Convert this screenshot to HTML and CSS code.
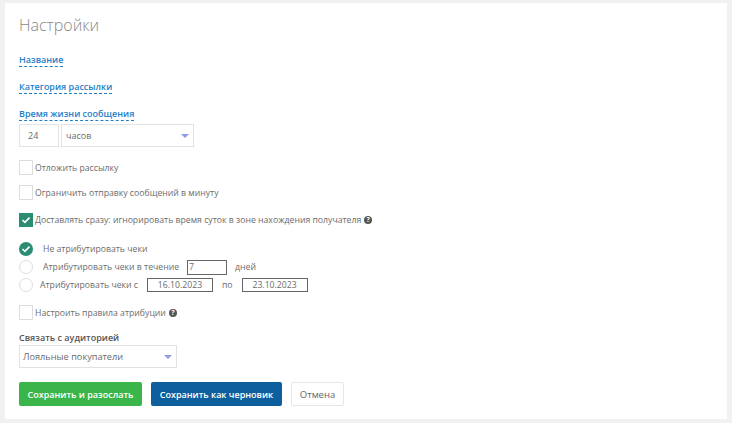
FILE: index.html
```html
<!DOCTYPE html>
<html lang="ru">
<head>
  <meta charset="UTF-8">
  <meta name="viewport" content="width=device-width, initial-scale=1.0">
  <title>Настройки</title>
  <link rel="stylesheet" href="styles.css">
</head>
<body>
  <div class="panel">
    <h1>Настройки</h1>

    <div class="section"><span class="link-label">Название</span></div>
    <div class="section"><span class="link-label">Категория рассылки</span></div>
    <div class="section section-ttl">
      <span class="link-label">Время жизни сообщения</span>
      <div class="ttl-row">
        <div class="field field-num">24</div>
        <div class="field field-select field-unit">часов<span class="caret"></span></div>
      </div>
    </div>

    <div class="check-row check-first"><span class="check"></span><span class="check-text">Отложить рассылку</span></div>
    <div class="check-row check-second"><span class="check"></span><span>Ограничить отправку сообщений в минуту</span></div>
    <div class="check-row check-third">
      <span class="check check-on">
        <svg width="10" height="8" viewBox="0 0 10 8"><path d="M1.5 4l2.4 2.3 4.6-4.6" fill="none" stroke="#fff" stroke-width="1.7"/></svg>
      </span>
      <span>Доставлять сразу: игнорировать время суток в зоне нахождения получателя</span>
      <span class="help">?</span>
    </div>

    <div class="radio-group">
      <div class="radio-row radio-row-first">
        <span class="radio radio-on">
          <svg width="10" height="8" viewBox="0 0 10 8"><path d="M1.5 4l2.4 2.3 4.6-4.6" fill="none" stroke="#fff" stroke-width="1.7"/></svg>
        </span>
        <span class="radio-text">Не атрибутировать чеки</span>
      </div>
      <div class="radio-row">
        <span class="radio"></span>
        <span class="radio-text">Атрибутировать чеки в течение</span>
        <span class="box box-days">7</span>
        <span class="days-label">дней</span>
      </div>
      <div class="radio-row">
        <span class="radio"></span>
        <span class="radio-text radio-text-tight">Атрибутировать чеки с</span>
        <span class="box box-date">16.10.2023</span>
        <span class="to-label">по</span>
        <span class="box box-date">23.10.2023</span>
      </div>
    </div>

    <div class="check-row check-rules"><span class="check"></span><span>Настроить правила атрибуции</span><span class="help">?</span></div>

    <div class="audience">
      <div class="audience-label">Связать с аудиторией</div>
      <div class="field field-select field-audience">Лояльные покупатели<span class="caret"></span></div>
    </div>

    <div class="actions">
      <button class="btn btn-green">Сохранить и разослать</button>
      <button class="btn btn-blue">Сохранить как черновик</button>
      <button class="btn btn-plain">Отмена</button>
    </div>
  </div>
</body>
</html>
```

FILE: styles.css
```css
body {
  margin: 0;
  padding: 3px 5px 4px;
  background: #f1f1f1;
  font-family: "Open Sans", "Liberation Sans", sans-serif;
  font-size: 8.7px;
  color: #6b6b6b;
}
.panel {
  height: 416px;
  box-sizing: border-box;
  background: #fff;
  padding: 11px 14px 0;
}
h1 {
  margin: 0;
  padding-bottom: 1px;
  font-size: 16px;
  line-height: 22px;
  font-weight: 300;
  color: #888;
}
.section {
  margin-top: 16px;
  height: 11px;
}
.section-ttl {
  height: auto;
}
.link-label {
  display: inline-block;
  font-size: 9px;
  font-weight: 600;
  line-height: 13px;
  color: #1f80c8;
  border-bottom: 1px dashed #1f80c8;
}
.ttl-row {
  display: flex;
  gap: 2px;
  margin-top: 3px;
}
.field {
  box-sizing: border-box;
  height: 23px;
  border: 1px solid #e2e2e2;
  line-height: 21px;
  background: #fff;
  font-size: 9px;
}
.field-num {
  width: 40px;
  padding-left: 8px;
}
.field-select {
  position: relative;
  padding-left: 4px;
}
.field-unit {
  width: 133px;
}
.field-audience {
  width: 158px;
  font-size: 9.2px;
  padding-left: 3px;
}
.caret {
  position: absolute;
  right: 4px;
  top: 9px;
  border-left: 4px solid transparent;
  border-right: 4px solid transparent;
  border-top: 4px solid #8d9be8;
}
.check-row {
  display: flex;
  align-items: center;
  line-height: 14px;
}
.check-first { margin-top: 12px; }
.check-second { margin-top: 10px; }
.check-third { margin-top: 13px; }
.check-rules { margin-top: 11px; }
.check-text {
  padding-top: 2px;
}
.check {
  flex: none;
  box-sizing: border-box;
  width: 14px;
  height: 15px;
  margin-right: 2px;
  border: 1px solid #ddd;
  display: flex;
  align-items: center;
  justify-content: center;
}
.check-on {
  height: 14px;
  border: 0;
  background: #2a8c73;
}
.help {
  flex: none;
  width: 8px;
  height: 8px;
  margin-left: 3px;
  border-radius: 50%;
  background: #555;
  color: #fff;
  font-size: 7px;
  font-weight: 700;
  line-height: 8px;
  text-align: center;
}
.radio-group {
  margin-top: 12px;
}
.radio-row {
  display: flex;
  align-items: center;
  height: 18px;
}
.radio-row-first {
  height: 19px;
}
.radio {
  flex: none;
  box-sizing: border-box;
  width: 14px;
  height: 14px;
  border: 1px solid #ddd;
  border-radius: 50%;
  display: flex;
  align-items: center;
  justify-content: center;
}
.radio-on {
  border: 0;
  background: #2a8c73;
}
.radio-text {
  margin-left: 10px;
}
.radio-text-tight {
  margin-left: 7px;
}
.box {
  box-sizing: border-box;
  height: 14px;
  border: 1px solid #666;
  line-height: 12px;
}
.box-days {
  width: 40px;
  height: 15px;
  margin-left: 8px;
  padding-left: 1px;
}
.days-label {
  margin-left: 8px;
}
.box-date {
  width: 66px;
  text-align: center;
  margin-left: 9px;
}
.to-label {
  margin-left: 9px;
}
.audience {
  margin-top: 11px;
}
.audience-label {
  font-size: 9px;
  font-weight: 600;
  line-height: 14px;
  color: #555;
}
.actions {
  display: flex;
  margin-top: 14px;
}
.btn {
  height: 24px;
  box-sizing: border-box;
  border: 0;
  border-radius: 2px;
  font-family: inherit;
  font-size: 9px;
  font-weight: 600;
  padding: 0;
  cursor: pointer;
}
.btn-green {
  width: 123px;
  background: #39b54a;
  color: #fff;
}
.btn-blue {
  width: 131px;
  margin-left: 9px;
  background: #0e5f9e;
  color: #fff;
}
.btn-plain {
  width: 53px;
  margin-left: 9px;
  background: #fff;
  border: 1px solid #e6e6e6;
  color: #666;
  font-size: 9.5px;
  font-weight: 400;
}
```
